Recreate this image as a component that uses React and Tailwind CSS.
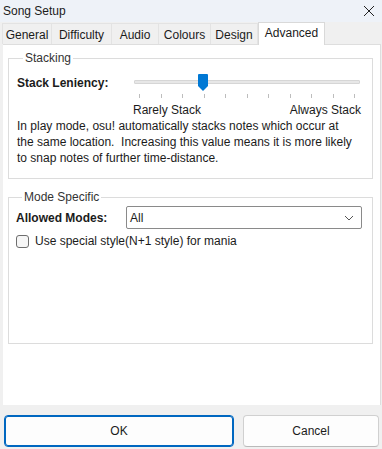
import React, { useState } from 'react';

const tabs = ['General', 'Difficulty', 'Audio', 'Colours', 'Design', 'Advanced'];
const tabWidths = ['w-[50px]', 'w-[61px]', 'w-[48px]', 'w-[53px]', 'w-[48px]', 'w-[67px]'];

const Slider = ({ value = 3, steps = 11 }) => {
  // tick spacing is 21.4px, first tick 5px in from the track start
  const left = value * 21.4;
  return (
    <div className="w-[226px] flex flex-col">
      <div className="relative h-[17px]">
        <div className="absolute left-0 right-0 top-[6px] h-[4px] bg-[#e7e7e7] border border-[#d6d6d6] rounded-[1px]" />
        <svg className="absolute top-0" style={{ left: `${left}px` }} width="10" height="17" viewBox="0 0 10 17">
          <path d="M1 0 H9 Q10 0 10 1 V12 L5 17 L0 12 V1 Q0 0 1 0 Z" fill="#0078d4" />
        </svg>
      </div>
      <div className="flex justify-between px-[5px] mt-[3px] h-[4px]">
        {Array.from({ length: steps }).map((_, i) => (
          <div key={i} className="w-px h-[4px] bg-[#bdbdbd]" />
        ))}
      </div>
    </div>
  );
};

const App = () => {
  const [active, setActive] = useState(5);
  const [mania, setMania] = useState(false);

  return (
    <div
      className="w-[382px] h-[449px] flex flex-col bg-[#f0f0f0] text-[12px] text-[#1b1b1b] overflow-hidden"
      style={{ fontFamily: '"Liberation Sans", Arial, sans-serif' }}
    >
      {/* title bar */}
      <div className="h-[22px] flex items-center justify-between pl-[3px] pr-[7px] bg-[#eef2f8]">
        <span className="text-[12px] text-[#1b1b1b]">Song Setup</span>
        <svg width="12" height="12" viewBox="0 0 12 12" className="text-[#222]">
          <path d="M1 1 L11 11 M11 1 L1 11" stroke="currentColor" strokeWidth="1" />
        </svg>
      </div>

      {/* tabs */}
      <div className="h-[22px] flex items-end pl-[2px] bg-[#f0f0f0]">
        {tabs.map((t, i) =>
          i === active ? (
            <button
              key={t}
              onClick={() => setActive(i)}
              className={`${tabWidths[i]} h-[23px] -mb-px bg-white border border-b-0 border-[#d9d9d9] flex items-center justify-center text-[12px] pb-[3px] relative z-10`}
            >
              {t}
            </button>
          ) : (
            <button
              key={t}
              onClick={() => setActive(i)}
              className={`${tabWidths[i]} h-[21px] bg-[#f0f0f0] border border-b-0 border-[#e3e3e3] -ml-px first:ml-0 flex items-center justify-center text-[12px] pt-[2px]`}
            >
              {t}
            </button>
          )
        )}
      </div>

      {/* panel */}
      <div className="ml-[3px] w-[378px] h-[361px] bg-white border-r border-t border-[#dedede] px-[5px] pt-[5px] flex flex-col gap-[10px]">
        <fieldset className="border border-[#dcdcdc] w-[365px] h-[129px] pl-[8px] pr-[10px]">
          <legend className="ml-[6px] px-[2px] text-[#333] leading-[16px]">Stacking</legend>
          <div className="flex items-start mt-[8px]">
            <span className="font-bold w-[117px] leading-[16px] mt-[1px]">Stack Leniency:</span>
            <Slider value={3} />
          </div>
          <div className="flex justify-between ml-[116px] w-[228px] mt-[4px] leading-[16px]">
            <span>Rarely Stack</span>
            <span>Always Stack</span>
          </div>
          <p className="leading-[16px] text-[#1b1b1b] whitespace-nowrap">
            In play mode, osu! automatically stacks notes which occur at
            <br />
            the same location.&nbsp; Increasing this value means it is more likely
            <br />
            to snap notes of further time-distance.
          </p>
        </fieldset>

        <fieldset className="border border-[#dcdcdc] w-[365px] h-[155px] pl-[7px] pr-[9px]">
          <legend className="ml-[6px] px-[2px] text-[#333] leading-[16px]">Mode Specific</legend>
          <div className="flex items-center mt-[1px]">
            <span className="font-bold w-[110px] leading-[16px]">Allowed Modes:</span>
            <div className="w-[236px] h-[23px] border border-[#8a8a8a] rounded-[2px] flex items-center justify-between pl-[3px] pr-[7px]">
              <span>All</span>
              <svg width="10" height="6" viewBox="0 0 10 6">
                <path d="M1 1 L5 5 L9 1" fill="none" stroke="#555" strokeWidth="1" />
              </svg>
            </div>
          </div>
          <label className="flex items-center gap-[6px] mt-[4px] cursor-pointer">
            <button
              onClick={() => setMania(!mania)}
              className="w-[13px] h-[13px] border border-[#6e6e6e] rounded-[3px] bg-[#f6f6f6]"
              aria-label="Use special style"
            />
            <span className="leading-[16px]">Use special style(N+1 style) for mania</span>
          </label>
        </fieldset>
      </div>

      {/* buttons */}
      <div className="flex gap-[9px] pl-[4px] pt-[10px]">
        <button className="w-[230px] h-[32px] bg-[#fdfdfd] border border-[#0067c0] rounded-[4px] shadow-[inset_0_0_0_1px_#0067c0] text-[12px]">
          OK
        </button>
        <button className="w-[136px] h-[32px] bg-[#fdfdfd] border border-[#d0d0d0] border-b-[#bababa] rounded-[4px] text-[12px]">
          Cancel
        </button>
      </div>
    </div>
  );
};

export default App;
